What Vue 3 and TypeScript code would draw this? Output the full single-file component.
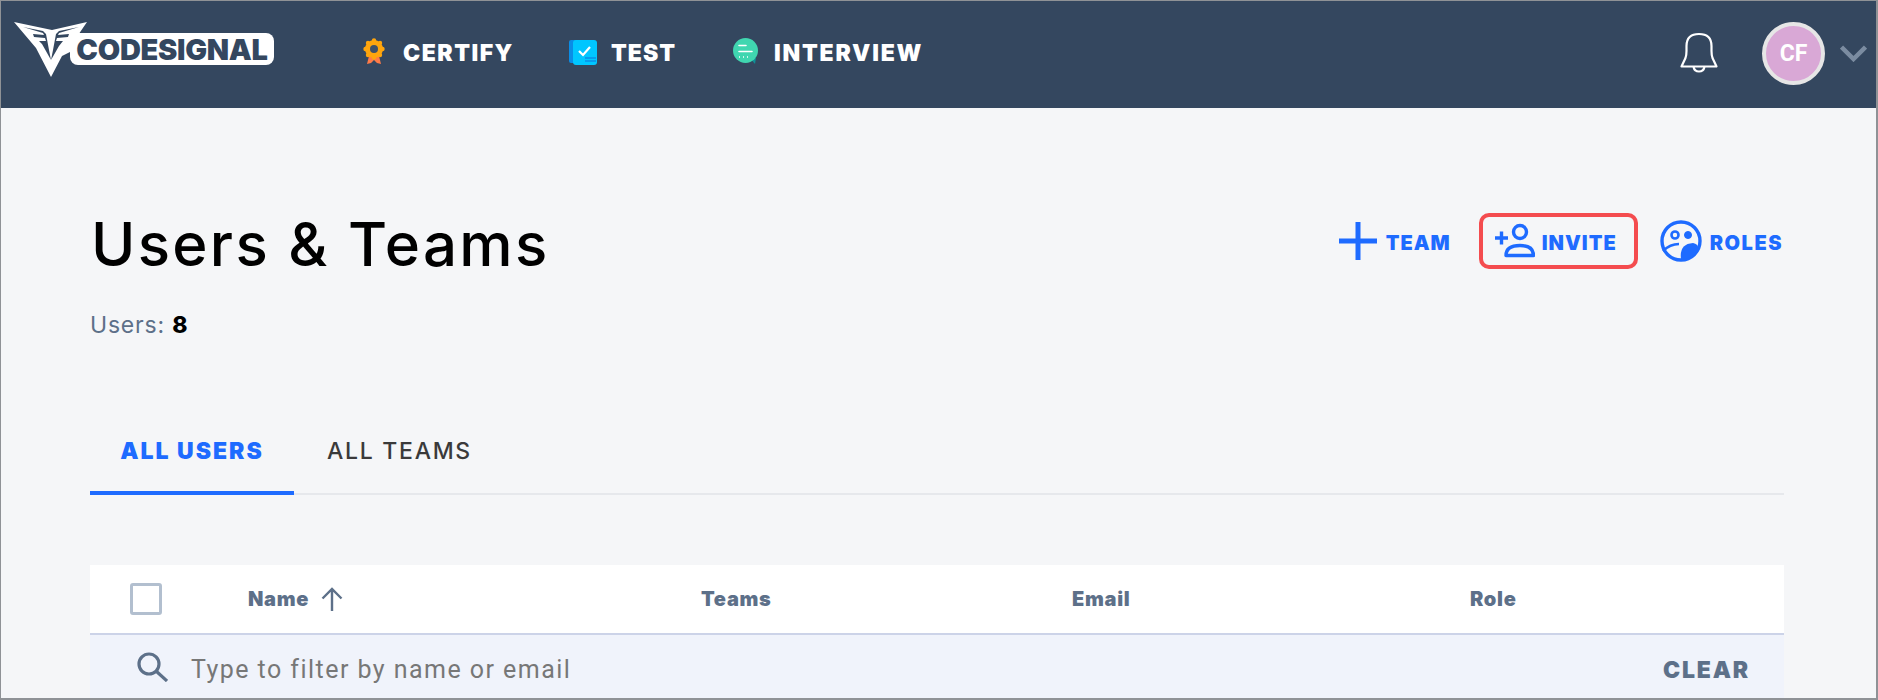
<script setup lang="ts">
const navItems = ['CERTIFY', 'TEST', 'INTERVIEW']
</script>

<template>
  <div class="frame">
    <header class="topbar">
      <div class="logo">
        <svg class="emblem" viewBox="14 21 74 56" width="74" height="56">
          <path fill="#fff" d="M14 22 L52 30 L87 22 L72 44 L70 52 L62 56 L51 77 L36 48 Z" />
          <path fill="#34475f" d="M23 27 L43 31 L46 34 L49 50 L51 60 L42 44 L39 41 L46 41 L45 38 L34 37 L33 34 L44 35 L43 33 Z" />
          <path fill="#34475f" d="M79 27 L59 31 L56 34 L53 50 L51 60 L59 46 L63 41 L56 41 L57 38 L68 37 L69 34 L58 35 L59 33 Z" />
        </svg>
        <div class="pill">CODESIGNAL</div>
      </div>
      <nav class="nav">
        <a v-for="item in navItems" :key="item" class="nav-item" :class="'nav-' + item.toLowerCase()">
          <svg v-if="item === 'CERTIFY'" class="nav-icon" width="22" height="27" viewBox="0 0 22 27">
            <path fill="#ff7b47" d="M6 18 L4 26 L8 25 L11 22 L14 25 L18 26 L16 18 Z" />
            <circle cx="11" cy="11" r="9" fill="#ffa50d" />
            <circle cx="11" cy="2.5" r="2.200" fill="#ffa50d" />
            <circle cx="17" cy="5" r="2.200" fill="#ffa50d" />
            <circle cx="19.500" cy="11" r="2.200" fill="#ffa50d" />
            <circle cx="17" cy="17" r="2.200" fill="#ffa50d" />
            <circle cx="11" cy="19.500" r="2.200" fill="#ffa50d" />
            <circle cx="5" cy="17" r="2.200" fill="#ffa50d" />
            <circle cx="2.500" cy="11" r="2.200" fill="#ffa50d" />
            <circle cx="5" cy="5" r="2.200" fill="#ffa50d" />
            <circle cx="11" cy="11" r="4" fill="#3f5068" />
          </svg>
          <svg v-else-if="item === 'TEST'" class="nav-icon" width="28" height="25" viewBox="0 0 28 25">
            <rect x="0" y="0" width="18" height="23" rx="2" fill="#0a8de6" />
            <rect x="4" y="0" width="24" height="25" rx="3" fill="#00c6ff" />
            <path d="M10 11 L14 15 L21 7" fill="none" stroke="#fff" stroke-width="2.200" />
            <path d="M16 18 H27 M16 21 H27" stroke="#0a8de6" stroke-width="1.500" />
          </svg>
          <svg v-else class="nav-icon" width="26" height="27" viewBox="0 0 26 27">
            <path fill="#0f8f97" d="M17 20 L23 20 L22 26 Z" />
            <circle cx="12.500" cy="12.500" r="12.500" fill="#40d6b0" />
            <path d="M6 7.500 H13 M6 13.500 H19" stroke="#fff" stroke-width="1.600" stroke-linecap="round" />
            <path d="M6 19 H7 M10 19 H11 M14 19 H15" stroke="#fff" stroke-width="1.500" />
          </svg>
          <span>{{ item }}</span>
        </a>
      </nav>
      <div class="spacer"></div>
      <svg class="bell" width="38" height="42" viewBox="0 0 38 42" fill="none" stroke="#fff" stroke-width="2.200">
        <path d="M1.500 34.500 L5.500 26 Q6.500 23 6.500 19 V14 Q6.500 2 19 2 Q31.500 2 31.500 14 V19 Q31.500 23 32.500 26 L36.500 34.500 Z" stroke-linejoin="round" />
        <path d="M13.500 35 Q14.500 39.500 19 39.500 Q23.500 39.500 24.500 35" />
      </svg>
      <div class="avatar">CF</div>
      <svg class="chevron" width="27" height="17" viewBox="0 0 27 17" fill="none" stroke="#7b8ca1" stroke-width="4.500">
        <path d="M1.500 2 L13.500 14 L25.500 2" />
      </svg>
    </header>

    <main class="content">
      <section class="title-row">
        <div>
          <h1 class="title">Users &amp; Teams</h1>
          <p class="count">Users: <b>8</b></p>
        </div>
        <div class="actions">
          <a class="action action-team">
            <svg width="38" height="38" viewBox="0 0 38 38" stroke="#1e6bff" stroke-width="5">
              <path d="M19 0 V38 M0 19 H38" />
            </svg>
            <span>TEAM</span>
          </a>
          <a class="action action-invite">
            <svg width="40" height="36" viewBox="0 0 40 36" fill="none" stroke="#1e6bff" stroke-width="3.400">
              <path d="M0 15 H13 M6.500 8.500 V21.500" />
              <circle cx="25" cy="9" r="6.500" />
              <path d="M11 32.500 Q11 22.500 25 22.500 Q38.500 22.500 38.500 32.500 Z" stroke-linejoin="round" />
            </svg>
            <span>INVITE</span>
          </a>
          <a class="action action-roles">
            <svg width="42" height="42" viewBox="0 0 42 42" fill="none" stroke="#1e6bff" stroke-width="3.400">
              <circle cx="21" cy="21" r="19" />
              <circle cx="15" cy="15" r="3.500" stroke-width="2.600" />
              <circle cx="28" cy="15" r="3.500" fill="#1e6bff" stroke-width="1" />
              <path d="M3 31 Q10 24 19 24" stroke-width="2.600" />
              <path d="M21 39 Q19 24 33 23 Q39 24 38 30 Q33 39 21 39 Z" fill="#1e6bff" stroke="none" />
            </svg>
            <span>ROLES</span>
          </a>
        </div>
      </section>

      <div class="tabs">
        <a class="tab tab-active">ALL USERS</a>
        <a class="tab">ALL TEAMS</a>
      </div>

      <section class="table">
        <div class="thead">
          <span class="checkbox"></span>
          <span class="th">Name
            <svg width="22" height="24" viewBox="0 0 22 24" fill="none" stroke="#5d7089" stroke-width="2.400">
              <path d="M11 24 V2 M1.500 11.500 L11 2 L20.500 11.500" />
            </svg>
          </span>
          <span class="th">Teams</span>
          <span class="th">Email</span>
          <span class="th">Role</span>
        </div>
        <div class="filter">
          <svg width="31" height="30" viewBox="0 0 31 30" fill="none" stroke="#5d7089" stroke-width="3.200">
            <circle cx="12" cy="12" r="10" />
            <path d="M19 19 L30 29" />
          </svg>
          <span class="placeholder">Type to filter by name or email</span>
          <span class="clear">CLEAR</span>
        </div>
      </section>
    </main>
  </div>
</template>

<style scoped>
.frame {
  box-sizing: border-box;
  width: 1878px;
  height: 700px;
  overflow: hidden;
  display: flex;
  flex-direction: column;
  background: #f5f6f8;
  border-style: solid;
  border-color: #8f9296;
  border-width: 1px 2px 2px 1px;
  font-family: Inter, "Liberation Sans", sans-serif;
}
.topbar {
  flex: none;
  height: 107px;
  background: #34475f;
  display: flex;
  align-items: flex-start;
}
.logo {
  display: flex;
  align-items: flex-start;
  margin: 20px 0 0 13px;
}
.emblem {
  flex: none;
  position: relative;
  z-index: 1;
}
.pill {
  margin: 12px 0 0 -18px;
  width: 204px;
  height: 32px;
  line-height: 33px;
  background: #fff;
  border-radius: 8px;
  color: #34475f;
  font-weight: 900;
  font-size: 29px;
  letter-spacing: -0.300px;
  text-align: center;
}
.nav {
  display: flex;
  margin: 37px 0 0 89px;
}
.nav-item {
  display: flex;
  align-items: flex-start;
  color: #fff;
  font-weight: 900;
  font-size: 23px;
  line-height: 28px;
}
.nav-item span {
  margin-top: 1px;
}
.nav-certify { width: 206px; gap: 18px; letter-spacing: 1.500px; }
.nav-test { width: 164px; gap: 14px; margin-top: 2px; letter-spacing: 1px; }
.nav-test span { margin-top: -1px; }
.nav-interview { gap: 15px; letter-spacing: 1.800px; }
.spacer {
  flex: 1;
}
.bell {
  margin: 31px 0 0 0;
}
.avatar {
  box-sizing: border-box;
  width: 63px;
  height: 63px;
  margin: 21px 0 0 44px;
  border-radius: 50%;
  border: 4px solid #e6e6e6;
  background: #d9a8d6;
  color: #fff;
  font-family: Roboto, sans-serif;
  font-weight: 700;
  font-size: 23px;
  line-height: 55px;
  text-align: center;
}
.chevron {
  margin: 44px 9px 0 15px;
}
.content {
  flex: 1;
  padding: 0 92px 0 89px;
  display: flex;
  flex-direction: column;
}
.title-row {
  display: flex;
  justify-content: space-between;
  align-items: flex-start;
  height: 307px;
}
.title {
  margin: 100px 0 0 1px;
  font-size: 60px;
  line-height: 72px;
  font-weight: 500;
  color: #000;
  letter-spacing: 2.300px;
}
.count {
  margin: 31px 0 0 0;
  font-size: 23px;
  line-height: 28px;
  letter-spacing: 0.800px;
  color: #5d7089;
}
.count b {
  color: #000;
  font-weight: 800;
}
.actions {
  display: flex;
  align-items: center;
  margin: 105px 1px 0 0;
}
.action {
  display: flex;
  align-items: center;
  color: #1e6bff;
  font-weight: 900;
  font-size: 20px;
  letter-spacing: 1px;
  box-sizing: border-box;
  height: 56px;
}
.action span {
  margin-top: 4px;
}
.action-team {
  gap: 9px;
}
.action-invite {
  width: 159px;
  margin-left: 28px;
  padding-left: 12px;
  gap: 7px;
  border: 4px solid #f44c4f;
  border-radius: 10px;
}
.action-roles {
  margin-left: 22px;
  gap: 8px;
  letter-spacing: 1.500px;
}
.tabs {
  display: flex;
  height: 78px;
  border-bottom: 2px solid #e6e8ec;
}
.tab {
  box-sizing: border-box;
  height: 80px;
  display: flex;
  align-items: center;
  justify-content: center;
  padding: 0 0 8px;
  width: 204px;
  font-size: 23px;
  font-weight: 500;
  color: #3a3a3a;
  letter-spacing: 1.700px;
}
.tab + .tab {
  width: 211px;
}
.tab-active {
  color: #1e6bff;
  font-weight: 900;
  letter-spacing: 2px;
  border-bottom: 4px solid #1e6bff;
  padding-bottom: 4px;
}
.table {
  margin-top: 70px;
}
.thead {
  box-sizing: border-box;
  height: 70px;
  background: #fff;
  border-bottom: 2px solid #ccd3e8;
  display: grid;
  grid-template-columns: 158px 453px 371px 398px 1fr;
  align-items: center;
}
.checkbox {
  box-sizing: border-box;
  display: block;
  width: 32px;
  height: 32px;
  margin-left: 40px;
  border: 3px solid #b2bfcf;
  border-radius: 3px;
}
.th {
  display: flex;
  align-items: center;
  gap: 12px;
  font-size: 20px;
  font-weight: 900;
  letter-spacing: 0.700px;
  color: #5d7089;
}
.filter {
  box-sizing: border-box;
  height: 63px;
  background: #f0f3fb;
  display: flex;
  align-items: center;
  padding: 0 34px 0 47px;
}
.placeholder {
  margin: 6px 0 0 23px;
  font-family: Roboto, sans-serif;
  font-size: 25px;
  color: #777;
  letter-spacing: 1.450px;
}
.clear {
  margin: 6px 0 0 auto;
  font-size: 23px;
  font-weight: 900;
  letter-spacing: 1.800px;
  color: #5d7089;
}
</style>
